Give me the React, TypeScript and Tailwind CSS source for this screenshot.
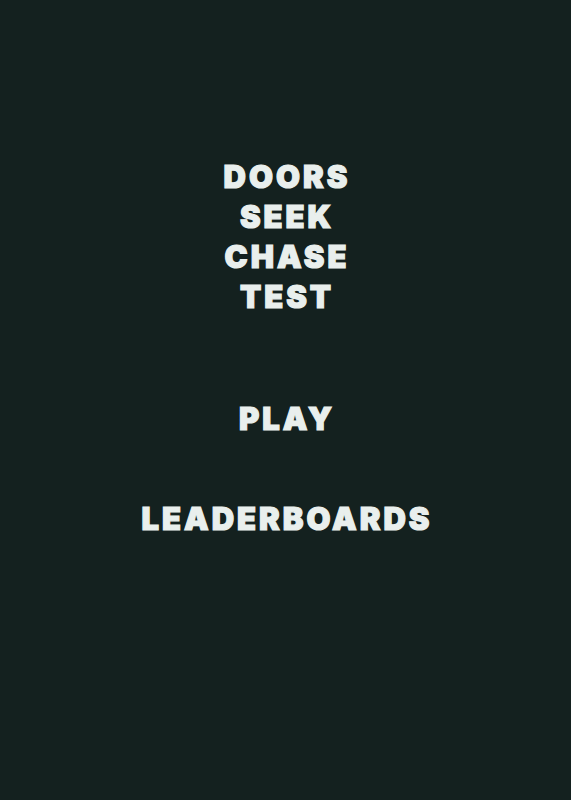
export default function App() {
  return (
    <div className="min-h-[800px] w-full bg-[#14211f] text-[#e9efed] font-['Inter','Liberation_Sans',sans-serif] font-black [-webkit-text-stroke:1.2px_#e9efed]">
      <div className="flex flex-col items-center pt-[157px] pl-[3px]">
        {/* title */}
        <h1 className="text-center text-[31px] leading-[40px] tracking-[3px]">
          <div>DOORS</div>
          <div>SEEK</div>
          <div>CHASE</div>
          <div>TEST</div>
        </h1>

        {/* menu */}
        <button className="mt-[82px] text-[31px] leading-[40px] tracking-[3px]">PLAY</button>
        <button className="mt-[60px] text-[31px] leading-[40px] tracking-[3px]">LEADERBOARDS</button>
      </div>
    </div>
  );
}
